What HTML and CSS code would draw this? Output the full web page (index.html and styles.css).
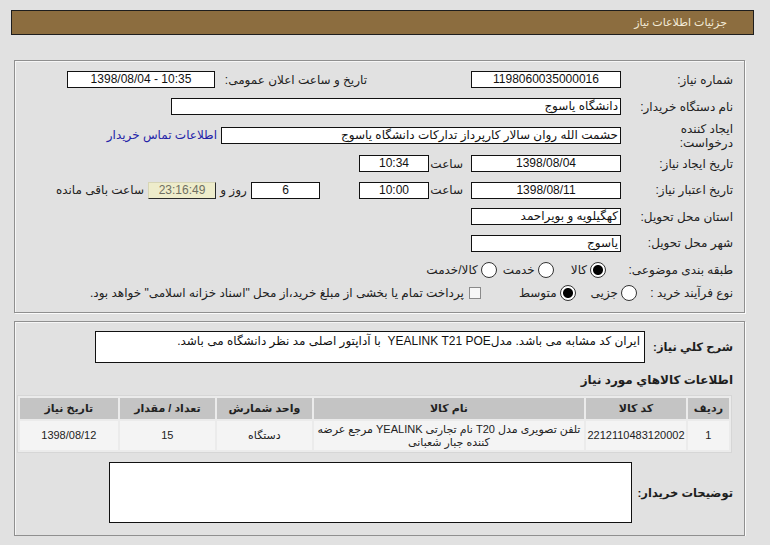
FILE: index.html
```html
<!DOCTYPE html>
<html lang="fa">
<head>
<meta charset="utf-8">
<title>جزئیات اطلاعات نیاز</title>
<link rel="stylesheet" href="styles.css">
</head>
<body>
<div class="page">
  <div class="titlebar">جزئیات اطلاعات نیاز</div>

  <div class="panel p1">
    <div class="row h27">
      <div class="lbl">شماره نیاز:</div>
      <div class="box w150 c ltr">1198060035000016</div>
      <div class="lbl2">تاریخ و ساعت اعلان عمومی:</div>
      <div class="box w148 c ltr">1398/08/04 - 10:35</div>
    </div>
    <div class="row h27">
      <div class="lbl">نام دستگاه خریدار:</div>
      <div class="box w450">دانشگاه یاسوج</div>
    </div>
    <div class="row h30">
      <div class="lbl two">ایجاد کننده<br>درخواست:</div>
      <div class="box w400">حشمت الله روان سالار کارپرداز تداركات دانشگاه یاسوج</div>
      <a class="link" href="#">اطلاعات تماس خریدار</a>
    </div>
    <div class="row h27">
      <div class="lbl">تاریخ ایجاد نیاز:</div>
      <div class="box w150 c">1398/08/04</div>
      <div class="saat">ساعت</div>
      <div class="box w70 c">10:34</div>
    </div>
    <div class="row h26">
      <div class="lbl">تاریخ اعتبار نیاز:</div>
      <div class="box w150 c">1398/08/11</div>
      <div class="saat">ساعت</div>
      <div class="box w70 c">10:00</div>
      <div class="box w69 c days">6</div>
      <div class="rooz">روز و</div>
      <div class="box w68 c remain">23:16:49</div>
      <div class="rest">ساعت باقی مانده</div>
    </div>
    <div class="row h27">
      <div class="lbl">استان محل تحویل:</div>
      <div class="box w150">کهگیلویه و بویراحمد</div>
    </div>
    <div class="row h26">
      <div class="lbl">شهر محل تحویل:</div>
      <div class="box w150">یاسوج</div>
    </div>
    <div class="row h28">
      <div class="lbl">طبقه بندی موضوعی:</div>
      <div class="opts cat">
        <span class="opt"><span class="radio on"></span>کالا</span>
        <span class="opt o2"><span class="radio"></span>خدمت</span>
        <span class="opt o3"><span class="radio"></span>کالا/خدمت</span>
      </div>
    </div>
    <div class="row h18">
      <div class="lbl">نوع فرآیند خرید :</div>
      <div class="opts proc">
        <span class="opt"><span class="radio"></span>جزیی</span>
        <span class="opt o2"><span class="radio on"></span>متوسط</span>
        <span class="opt o4"><span class="check"></span>پرداخت تمام یا بخشی از مبلغ خرید،از محل "اسناد خزانه اسلامی" خواهد بود.</span>
      </div>
    </div>
  </div>

  <div class="panel p2">
    <div class="descrow">
      <div class="blbl">شرح کلي نياز:</div>
      <div class="descbox">ایران کد مشابه می باشد. مدلYEALINK T21 POE&nbsp; با آداپتور اصلی مد نظر دانشگاه می باشد.</div>
    </div>
    <div class="heading">اطلاعات کالاهاي مورد نياز</div>
    <table class="items">
      <colgroup>
        <col class="c1"><col class="c2"><col class="c3"><col class="c4"><col class="c5"><col class="c6">
      </colgroup>
      <thead>
        <tr><th>ردیف</th><th>کد کالا</th><th>نام کالا</th><th>واحد شمارش</th><th>تعداد / مقدار</th><th>تاریخ نیاز</th></tr>
      </thead>
      <tbody>
        <tr>
          <td>1</td>
          <td class="code">2212110483120002</td>
          <td class="name">تلفن تصویری مدل T20 نام تجارتی YEALINK مرجع عرضه کننده جبار شعبانی</td>
          <td>دستگاه</td>
          <td>15</td>
          <td>1398/08/12</td>
        </tr>
      </tbody>
    </table>
    <div class="noterow">
      <div class="blbl nl">توضیحات خریدار:</div>
      <div class="notebox"></div>
    </div>
  </div>
</div>
</body>
</html>
```
FILE: styles.css
```css
html, body {
  margin: 0;
  padding: 0;
}
body {
  background: #e1e1e1;
  font-family: "Liberation Sans", "DejaVu Sans", sans-serif;
  font-size: 12px;
  color: #222;
}
.page {
  direction: rtl;
  padding-top: 10px;
}
.titlebar {
  margin: 0 16px 0 11px;
  height: 25px;
  box-sizing: border-box;
  border: 1px solid #1e1e1e;
  background: #8c6d3f;
  color: #f4ecd9;
  padding-right: 26px;
  line-height: 23px;
  font-size: 11px;
}
.panel {
  margin: 0 25px 0 14px;
  border: 1px solid #8f8f8f;
  box-shadow: 1px 1px 0 #fbfbfb, inset 1px 1px 0 #f6f6f6;
  padding-right: 11px;
}
.p1 {
  margin-top: 25px;
  padding-top: 5px;
  padding-bottom: 10px;
}
.row {
  display: flex;
  align-items: center;
}
.h27 { height: 27px; }
.h30 { height: 30px; }
.h26 { height: 26px; }
.h28 { height: 28px; }
.h18 { height: 18px; }
.lbl {
  width: 112px;
  flex: none;
  color: #222;
  white-space: nowrap;
}
.lbl.two {
  line-height: 14px;
  white-space: normal;
  margin-top: 2px;
}
.lbl2 {
  width: 152px;
  margin-right: 104px;
  flex: none;
  white-space: nowrap;
}
.box {
  flex: none;
  height: 17px;
  box-sizing: border-box;
  border: 1px solid #111;
  background: #fff;
  line-height: 15px;
  padding: 0 2px;
  white-space: nowrap;
  overflow: hidden;
  color: #111;
}
.c { text-align: center; }
.ltr { direction: ltr; }
.w150 { width: 150px; }
.w148 { width: 148px; }
.w450 { width: 450px; }
.w400 { width: 400px; }
.w70 { width: 70px; }
.w69 { width: 69px; }
.w68 { width: 68px; }
.link {
  margin-right: 4px;
  color: #2323a8;
  text-decoration: none;
  white-space: nowrap;
}
.saat {
  width: 42px;
  flex: none;
  text-align: right;
  padding-right: 8px;
  box-sizing: border-box;
}
.days { margin-right: 39px; }
.rooz {
  width: 35px;
  flex: none;
  text-align: center;
}
.remain {
  background: #eeeccb;
  color: #6f6f62;
  border-color: #d7d5b5 #2a2a2a #2a2a2a #d7d5b5;
}
.rest {
  margin-right: 4px;
  white-space: nowrap;
}
.opts {
  display: flex;
  align-items: center;
  white-space: nowrap;
}
.cat { margin-right: 15px; }
.proc { margin-right: -16px; }
.opt {
  display: inline-flex;
  align-items: center;
  gap: 3px;
}
.cat .o2 { margin-right: 17px; }
.cat .o3 { margin-right: 6px; }
.proc .o2 { margin-right: 15px; }
.proc .o4 { margin-right: 38px; }
.radio {
  width: 16px;
  height: 16px;
  box-sizing: border-box;
  border: 1px solid #333;
  border-radius: 50%;
  background: #fff;
  flex: none;
}
.radio.on {
  background: radial-gradient(circle, #000 0 4.5px, #fff 5.5px);
}
.check {
  width: 12px;
  height: 12px;
  box-sizing: border-box;
  border: 1px solid #8a8a8a;
  background: #f7f7f7;
  flex: none;
  margin-left: 2px;
}
.p2 {
  margin-top: 8px;
  padding-top: 9px;
  padding-bottom: 12px;
}
.descrow {
  display: flex;
  align-items: center;
}
.blbl {
  width: 88px;
  flex: none;
  font-weight: bold;
  font-size: 11.5px;
  color: #1e1e1e;
  white-space: nowrap;
}
.descbox {
  width: 550px;
  height: 32px;
  box-sizing: border-box;
  border: 1px solid #111;
  background: #fff;
  padding: 2px 4px 0 0;
  line-height: 15px;
  color: #111;
}
.heading {
  margin-top: 7px;
  font-weight: bold;
  font-size: 12px;
  line-height: 20px;
  color: #1e1e1e;
}
.items {
  margin: 5px 1px 0 14px;
  width: 715px;
  table-layout: fixed;
  border-collapse: separate;
  border-spacing: 2px;
  background: #ebebeb;
  border: 1px solid #d6d6d6;
  font-size: 11px;
}
.c1 { width: 41px; }
.c2 { width: 99px; }
.c3 { width: 269px; }
.c4 { width: 94px; }
.c5 { width: 95px; }
.c6 { width: 97px; }
.items th {
  background: #c4c4c4;
  height: 21px;
  font-weight: bold;
  color: #222;
  padding: 0;
}
.items td {
  background: #f4f4f4;
  height: 29px;
  text-align: center;
  padding: 0 2px;
  line-height: 13px;
  color: #222;
}
.items td.code {
  padding: 0;
}
.noterow {
  display: flex;
  align-items: center;
  margin-top: 9px;
}
.nl { width: 101px; }
.notebox {
  width: 523px;
  height: 61px;
  box-sizing: border-box;
  border: 1px solid #111;
  background: #fff;
}
```
